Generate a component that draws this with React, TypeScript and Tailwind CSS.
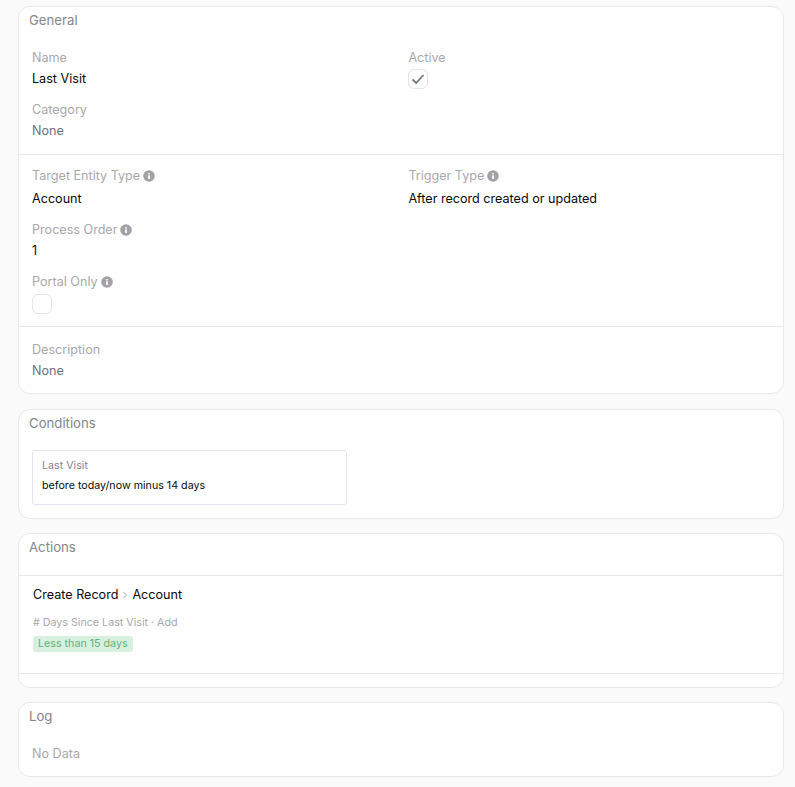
import { ReactNode } from 'react';

const InfoIcon = () => (
  <svg viewBox="0 0 12 12" className="ml-[3px] size-[12px] shrink-0">
    <circle cx="6" cy="6" r="5.8" fill="#a1a1a6" />
    <rect x="5.1" y="5.3" width="1.8" height="3.8" rx="0.4" fill="#fff" />
    <rect x="5.1" y="2.9" width="1.8" height="1.6" rx="0.5" fill="#fff" />
  </svg>
);

const Checkbox = ({ checked }: { checked?: boolean }) => (
  <div className="flex size-5 items-center justify-center rounded-md border border-[#e2e4f0] bg-white">
    {checked && (
      <svg viewBox="0 0 14 14" className="size-[14px]" fill="none" stroke="#6f7a76" strokeWidth="1.8">
        <path d="M1.5 7.5 5.2 11 12.5 3" />
      </svg>
    )}
  </div>
);

const Field = ({ label, info, className, children }: { label: string; info?: boolean; className?: string; children: ReactNode }) => (
  <div className={className}>
    <div className="flex h-[21px] items-center pt-[1px] text-[#a8a8ad]">
      {label}
      {info && <InfoIcon />}
    </div>
    {children}
  </div>
);

const Value = ({ children, muted }: { children: ReactNode; muted?: boolean }) => (
  <div className={`h-[21px] leading-[21px] ${muted ? 'text-[#6b7280]' : 'text-[#0a0a0a]'}`}>{children}</div>
);

const Card = ({ title, className, children }: { title: string; className?: string; children: ReactNode }) => (
  <section className={`rounded-xl border border-[#e8e8ea] bg-white ${className ?? ''}`}>
    <h2 className="h-[26px] px-[10px] pt-[3px] text-[13.2px] leading-[20px] text-[#85858a]">{title}</h2>
    {children}
  </section>
);

export default function App() {
  return (
    <div className="min-h-[787px] bg-[#fafafa] pl-[18px] pr-[11px] pt-[6px] font-['Inter',sans-serif] text-[12.6px]">
      <Card title="General" className="h-[388px]">
        <div className="grid h-[122px] grid-cols-[376.4px_1fr] border-b border-[#e8e8ea] pl-[13px] pt-[14px]">
          <div className="flex flex-col gap-[10px]">
            <Field label="Name">
              <Value>Last Visit</Value>
            </Field>
            <Field label="Category">
              <Value muted>None</Value>
            </Field>
          </div>
          <Field label="Active">
            <div className="mt-[1px]">
              <Checkbox checked />
            </div>
          </Field>
        </div>
        <div className="grid h-[172px] grid-cols-[376.4px_1fr] border-b border-[#e8e8ea] pl-[13px] pt-[10px]">
          <div className="flex flex-col gap-[10px]">
            <Field label="Target Entity Type" info>
              <div className="mt-[2px]">
                <Value>Account</Value>
              </div>
            </Field>
            <Field label="Process Order" info>
              <Value>1</Value>
            </Field>
            <Field label="Portal Only" info>
              <div className="mt-[2px]">
                <Checkbox />
              </div>
            </Field>
          </div>
          <Field label="Trigger Type" info>
            <div className="mt-[2px]">
              <Value>After record created or updated</Value>
            </div>
          </Field>
        </div>
        <div className="pl-[13px] pt-[12px]">
          <Field label="Description">
            <Value muted>None</Value>
          </Field>
        </div>
      </Card>

      <Card title="Conditions" className="mt-[15px] h-[110px]">
        <div className="ml-[13px] mt-[14px] h-[55px] w-[315px] rounded-[3px] border border-[#e2e4f0] px-[9px] pt-[5px] text-[10.7px]">
          <div className="h-[20px] leading-[20px] text-[#85858a]">Last Visit</div>
          <div className="h-[20px] leading-[20px] text-[#0a0a0a]">before today/now minus 14 days</div>
        </div>
      </Card>

      <Card title="Actions" className="mt-[14px] h-[155px]">
        <div className="mt-[15px] h-[99px] border-y border-[#e8e8ea] pl-[14px] pt-[9px]">
          <div className="flex h-[20px] items-center text-[#0a0a0a]">
            Create Record
            <svg viewBox="0 0 8 8" className="mx-[3px] size-2" fill="none" stroke="#a8a8ad" strokeWidth="1">
              <path d="M2.5 1 5.5 4 2.5 7" />
            </svg>
            Account
          </div>
          <div className="mt-[9px] h-[18px] text-[10.7px] leading-[18px] text-[#a8a8ad]"># Days Since Last Visit · Add</div>
          <div className="mt-[4px] flex h-[16px] w-fit items-center rounded-[3px] bg-[#d9f0e0] px-[5px] text-[10.7px] text-[#62b27d]">
            Less than 15 days
          </div>
        </div>
      </Card>

      <Card title="Log" className="mt-[14px] h-[75px]">
        <div className="pl-[13px] pt-[14px] leading-[21px] text-[#a8a8ad]">No Data</div>
      </Card>
    </div>
  );
}
